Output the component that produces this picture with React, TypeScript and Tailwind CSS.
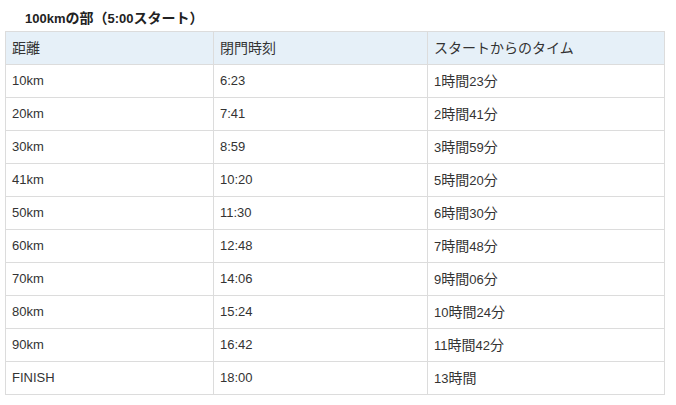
import React from "react";

const rows: [string, string, string][] = [
  ["10km", "6:23", "1時間23分"],
  ["20km", "7:41", "2時間41分"],
  ["30km", "8:59", "3時間59分"],
  ["41km", "10:20", "5時間20分"],
  ["50km", "11:30", "6時間30分"],
  ["60km", "12:48", "7時間48分"],
  ["70km", "14:06", "9時間06分"],
  ["80km", "15:24", "10時間24分"],
  ["90km", "16:42", "11時間42分"],
  ["FINISH", "18:00", "13時間"],
];

function T({ s }: { s: string }) {
  const parts = s.split(/([^\x00-\x7f]+)/).filter((p) => p.length > 0);
  return (
    <>
      {parts.map((p, i) =>
        /[^\x00-\x7f]/.test(p) ? (
          <span key={i} className="text-[14px]">
            {p}
          </span>
        ) : (
          <span key={i}>{p}</span>
        )
      )}
    </>
  );
}

export default function App() {
  return (
    <div
      className="w-[676px] h-[405px] bg-white text-[#333] pl-[5px]"
      style={{ fontFamily: '"Liberation Sans", "Noto Sans CJK JP", sans-serif' }}
    >
      <div className="h-[31px] pl-[20px] pt-[9px] text-[13px] font-bold leading-[18px] text-[#222]">
        <T s="100kmの部（5:00スタート）" />
      </div>
      <table className="border-collapse text-[13px] leading-[18px]">
        <thead>
          <tr className="bg-[#e6f0f8]">
            <th className="w-[208px] h-[33px] border border-[#dcdcdc] px-[6px] text-left font-normal">
              <T s="距離" />
            </th>
            <th className="w-[214px] h-[33px] border border-[#dcdcdc] px-[6px] text-left font-normal">
              <T s="閉門時刻" />
            </th>
            <th className="w-[237px] h-[33px] border border-[#dcdcdc] px-[6px] text-left font-normal">
              <T s="スタートからのタイム" />
            </th>
          </tr>
        </thead>
        <tbody>
          {rows.map((r) => (
            <tr key={r[0]}>
              {r.map((c, i) => (
                <td key={i} className="h-[33px] border border-[#dcdcdc] px-[6px]">
                  <T s={c} />
                </td>
              ))}
            </tr>
          ))}
        </tbody>
      </table>
    </div>
  );
}
